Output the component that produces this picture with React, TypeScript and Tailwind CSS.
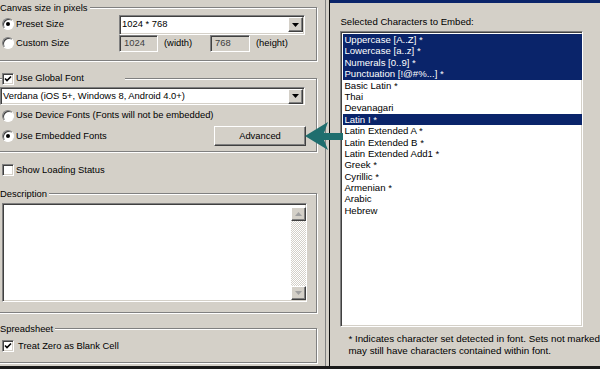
import React from "react";

const sunken =
  "border border-t-[#808080] border-l-[#808080] border-b-white border-r-white shadow-[inset_1px_1px_0_#404040,inset_-1px_-1px_0_#d4d0c8]";
const raised =
  "border border-t-white border-l-white border-b-[#404040] border-r-[#404040] shadow-[inset_-1px_-1px_0_#808080]";

function Radio({ checked }: { checked?: boolean }) {
  return (
    <div className="w-[12px] h-[12px] rounded-full bg-white border border-t-[#808080] border-l-[#808080] border-b-white border-r-white shadow-[inset_1px_1px_0_#404040] flex items-center justify-center shrink-0">
      {checked && <div className="w-[4px] h-[4px] rounded-full bg-black" />}
    </div>
  );
}

function Check({ checked }: { checked?: boolean }) {
  return (
    <div className={`w-[12px] h-[12px] bg-white ${sunken} flex items-center justify-center shrink-0`}>
      {checked && (
        <svg width="8" height="8" viewBox="0 0 8 8">
          <path d="M1 3.5 L3 5.5 L7 1.5" stroke="#000" strokeWidth="1.6" fill="none" />
        </svg>
      )}
    </div>
  );
}

function DropBtn() {
  return (
    <div className={`w-[15px] h-[15px] bg-[#d4d0c8] ${raised} flex items-center justify-center shrink-0`}>
      <svg width="7" height="4" viewBox="0 0 7 4">
        <path d="M0 0 H7 L3.5 4 Z" fill="#000" />
      </svg>
    </div>
  );
}

const fs =
  "ml-[-8px] w-[325px] border border-[#808080] shadow-[1px_1px_0_#fff,inset_1px_1px_0_#fff] pl-[9px] pr-0 pt-0 m-0";

function Arrow({ up }: { up?: boolean }) {
  return (
    <div className={`w-[15px] h-[14px] bg-[#d4d0c8] ${raised} flex items-center justify-center`}>
      <svg width="7" height="4" viewBox="0 0 7 4">
        {up ? (
          <path d="M0 4 H7 L3.5 0 Z" fill="#a0a0a0" />
        ) : (
          <path d="M0 0 H7 L3.5 4 Z" fill="#a0a0a0" />
        )}
      </svg>
    </div>
  );
}

const items: [string, boolean][] = [
  ["Uppercase [A..Z] *", true],
  ["Lowercase [a..z] *", true],
  ["Numerals [0..9] *", true],
  ["Punctuation [!@#%...] *", true],
  ["Basic Latin *", false],
  ["Thai", false],
  ["Devanagari", false],
  ["Latin I *", true],
  ["Latin Extended A *", false],
  ["Latin Extended B *", false],
  ["Latin Extended Add1 *", false],
  ["Greek *", false],
  ["Cyrillic *", false],
  ["Armenian *", false],
  ["Arabic", false],
  ["Hebrew", false],
];

export default function App() {
  return (
    <div className="relative w-[600px] h-[369px] overflow-hidden bg-[#d4d0c8] flex flex-col font-['Liberation_Sans',Arial,sans-serif] text-[9.4px] text-black">
      <div className="flex flex-1 min-h-0">
        {/* Left panel */}
        <div className="w-[326px] flex flex-col overflow-hidden">
          {/* Canvas size group */}
          <fieldset className={`${fs} pb-[8px]`}>
            <legend className="ml-[-2px] pr-[2px] h-[15px] leading-[15px] bg-[#d4d0c8]">Canvas size in pixels</legend>
            <div className="flex items-center h-[19px]">
              <div className="flex items-center w-[117px]">
                <Radio checked />
                <span className="ml-[2px]">Preset Size</span>
              </div>
              <div className={`w-[186px] h-[20px] bg-white ${sunken} flex items-center justify-between pl-[2px] pr-[1px]`}>
                <span>1024 * 768</span>
                <DropBtn />
              </div>
            </div>
            <div className="flex items-center h-[17px] mt-[1px]">
              <div className="flex items-center w-[117px]">
                <Radio />
                <span className="ml-[2px]">Custom Size</span>
              </div>
              <div className={`w-[39px] h-[17px] bg-[#d4d0c8] ${sunken} flex items-center pl-[4px] text-[#404040]`}>1024</div>
              <span className="w-[52px] pl-[6px]">(width)</span>
              <div className={`w-[40px] h-[17px] bg-[#d4d0c8] ${sunken} flex items-center pl-[4px] text-[#404040]`}>768</div>
              <span className="pl-[6px]">(height)</span>
            </div>
          </fieldset>

          {/* Font group */}
          <fieldset className={`${fs} mt-[10px] pb-[5px]`}>
            <legend className="w-[123px] h-[15px] bg-[#d4d0c8] flex items-center">
              <Check checked />
              <span className="ml-[2px]">Use Global Font</span>
            </legend>
            <div className={`ml-[-2px] mt-[1px] w-[305px] h-[18px] bg-white ${sunken} flex items-center justify-between pl-[2px] pr-[1px]`}>
              <span>Verdana (iOS 5+, Windows 8, Android 4.0+)</span>
              <DropBtn />
            </div>
            <div className="flex items-center h-[21px]">
              <Radio />
              <span className="ml-[2px]">Use Device Fonts (Fonts will not be embedded)</span>
            </div>
            <div className="flex items-center h-[20px]">
              <div className="flex items-center w-[212px]">
                <Radio checked />
                <span className="ml-[2px]">Use Embedded Fonts</span>
              </div>
              <div className={`w-[92px] h-[20px] bg-[#d4d0c8] ${raised} flex items-center justify-center`}>Advanced</div>
            </div>
          </fieldset>

          <div className="flex items-center h-[14px] mt-[11px] pl-[2px]">
            <Check />
            <span className="ml-[2px]">Show Loading Status</span>
          </div>

          {/* Description */}
          <fieldset className={`${fs} mt-[9px] pb-[10px]`}>
            <legend className="ml-[-2px] pr-[2px] h-[15px] leading-[15px] bg-[#d4d0c8]">Description</legend>
            <div className={`mt-[2px] w-[305px] h-[99px] bg-white ${sunken} flex justify-end pt-[3px] pb-[1px] pr-[0px]`}>
              <div className="w-[15px] h-full flex flex-col justify-between bg-[repeating-conic-gradient(#d4d0c8_0_25%,#ffffff_0_50%)] bg-[length:2px_2px]">
                <Arrow up />
                <Arrow />
              </div>
            </div>
          </fieldset>

          {/* Spreadsheet */}
          <fieldset className={`${fs} mt-[8px] pb-[9px]`}>
            <legend className="ml-[-2px] pr-[2px] h-[15px] leading-[15px] bg-[#d4d0c8]">Spreadsheet</legend>
            <div className="flex items-center h-[14px] mt-[3px]">
              <Check checked />
              <span className="ml-[4px]">Treat Zero as Blank Cell</span>
            </div>
          </fieldset>
        </div>

        {/* Separator */}
        <div className="w-[5px] border-l border-l-[#808080] border-r border-r-[#101010] bg-[#d4d0c8]" />

        {/* Right panel */}
        <div className="flex-1 flex flex-col">
          <div className="h-[3px] bg-[#0a246a]" />
          <div className="pl-[10px] mt-[13px] h-[12px] leading-[12px] whitespace-nowrap text-[9.6px]">Selected Characters to Embed:</div>
          <div className={`ml-[10px] mt-[3px] w-[243px] h-[296px] bg-white ${sunken} p-[2px] pr-0`}>
            <div className="flex flex-col">
              {items.map(([t, sel]) => (
                <div
                  key={t}
                  className={`h-[11.4px] leading-[11.4px] pl-[1px] whitespace-nowrap text-[9.6px] ${sel ? "bg-[#0a246a] text-white" : ""}`}
                >
                  {t}
                </div>
              ))}
            </div>
          </div>
          <div className="pl-[18px] mt-[6px] leading-[12px] whitespace-nowrap text-[9.8px]">
            * Indicates character set detected in font. Sets not marked
            <br />
            may still have characters contained within font.
          </div>
        </div>
      </div>
      <div className="h-[3px] bg-[#1a1a1a]" />

      {/* Callout arrow */}
      <svg className="absolute left-[300px] top-[118px]" width="48" height="36" viewBox="0 0 48 36">
        <path d="M5 18 L28 4 L24 15 L43 15 L43 22 L24 22 L28 32 Z" fill="#1f6e6e" />
      </svg>
    </div>
  );
}
